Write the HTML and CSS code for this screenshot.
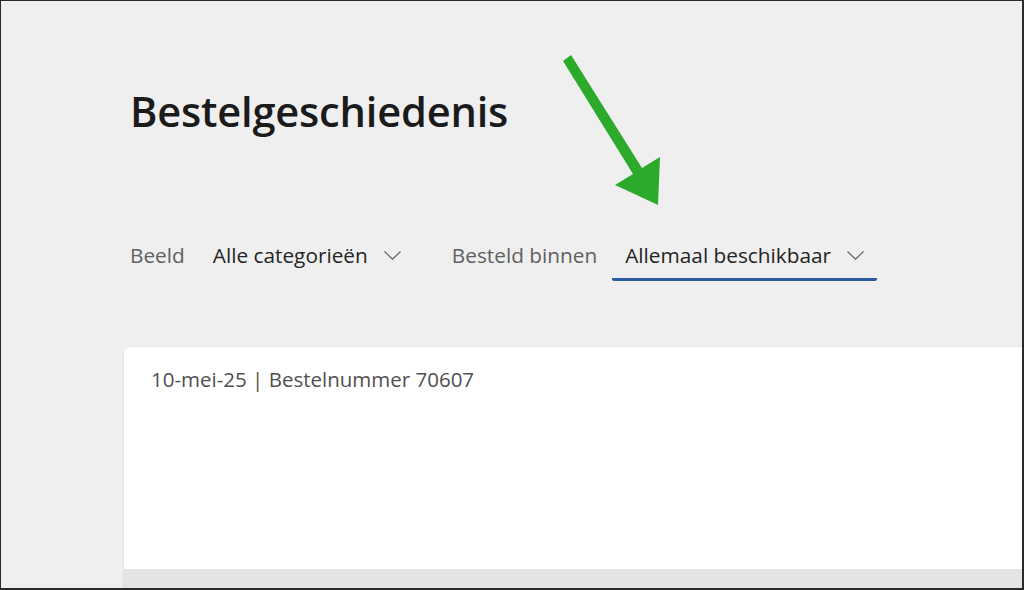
FILE: index.html
```html
<!DOCTYPE html>
<html lang="nl">
<head>
<meta charset="utf-8">
<title>Bestelgeschiedenis</title>
<link rel="stylesheet" href="styles.css">
</head>
<body>
<div class="frame">
  <main class="page">
    <h1 class="title">Bestelgeschiedenis</h1>
    <div class="filters">
      <div class="filter">
        <span class="label">Beeld</span>
        <button class="dropdown">
          <span>Alle categorieën</span>
          <svg class="chev" viewBox="0 0 17 9" width="17" height="9"><path d="M0.5 0.5 L8.5 8.2 L16.5 0.5" fill="none" stroke="#616161" stroke-width="1.2"/></svg>
        </button>
      </div>
      <div class="filter second">
        <span class="label">Besteld binnen</span>
        <button class="dropdown active">
          <span>Allemaal beschikbaar</span>
          <svg class="chev" viewBox="0 0 17 9" width="17" height="9"><path d="M0.5 0.5 L8.5 8.2 L16.5 0.5" fill="none" stroke="#616161" stroke-width="1.2"/></svg>
        </button>
      </div>
    </div>
    <section class="card">
      <div class="card-body">
        <div class="order-meta">10-mei-25 | Bestelnummer 70607</div>
      </div>
      <div class="card-foot"></div>
    </section>
  </main>
  <svg class="arrow" viewBox="0 0 1024 590" width="1024" height="590">
    <polygon points="563,61 571,55 642,168 660,157 658,205 615,185 633,174" fill="#2baa2b"/>
  </svg>
</div>
</body>
</html>
```
FILE: styles.css
```css
html, body {
  margin: 0;
  padding: 0;
  background: #efefef;
}
body {
  font-family: "Open Sans", "Noto Sans", sans-serif;
  color: #242424;
}
.frame {
  position: relative;
  width: 1024px;
  height: 590px;
  box-sizing: border-box;
  border-top: 1px solid #2a2a2a;
  border-left: 1px solid #2a2a2a;
  border-right: 2px solid #2a2a2a;
  border-bottom: 2px solid #2a2a2a;
  background: #efefef;
  overflow: hidden;
}
.page {
  padding-left: 123px;
  display: flex;
  flex-direction: column;
}
.title {
  margin: 84px 0 0 6px;
  font-size: 41.6px;
  font-weight: 600;
  line-height: 52px;
  color: #1b1b1b;
  letter-spacing: -0.2px;
}
.filters {
  display: flex;
  align-items: baseline;
  margin: 96px 0 0 6px;
  gap: 51px;
}
.filter {
  display: flex;
  align-items: baseline;
  gap: 28px;
}
.filter.second {
  gap: 15px;
}
.label {
  font-size: 20.8px;
  color: #616161;
}
.dropdown {
  display: flex;
  align-items: center;
  gap: 16px;
  border: 0;
  background: transparent;
  font: inherit;
  font-size: 20.8px;
  color: #242424;
  padding: 8px 0 9px 0;
  border-bottom: 3px solid transparent;
  border-radius: 2px;
}
.dropdown.active {
  padding-left: 13px;
  padding-right: 13px;
  border-bottom-color: #2c5aa0;
}
.chev {
  display: block;
}
.card {
  margin-top: 66px;
  margin-right: -2px;
  display: flex;
  flex-direction: column;
  border-radius: 6px 0 0 0;
  overflow: hidden;
  box-shadow: -1px 0 2px rgba(0,0,0,0.06);
}
.card-body {
  background: #ffffff;
  height: 222px;
  padding: 18px 27px;
  box-sizing: border-box;
}
.order-meta {
  font-size: 20.5px;
  color: #505050;
}
.card-foot {
  height: 20px;
  background: #e4e4e4;
}
.arrow {
  position: absolute;
  left: -1px;
  top: -1px;
  pointer-events: none;
}
```
